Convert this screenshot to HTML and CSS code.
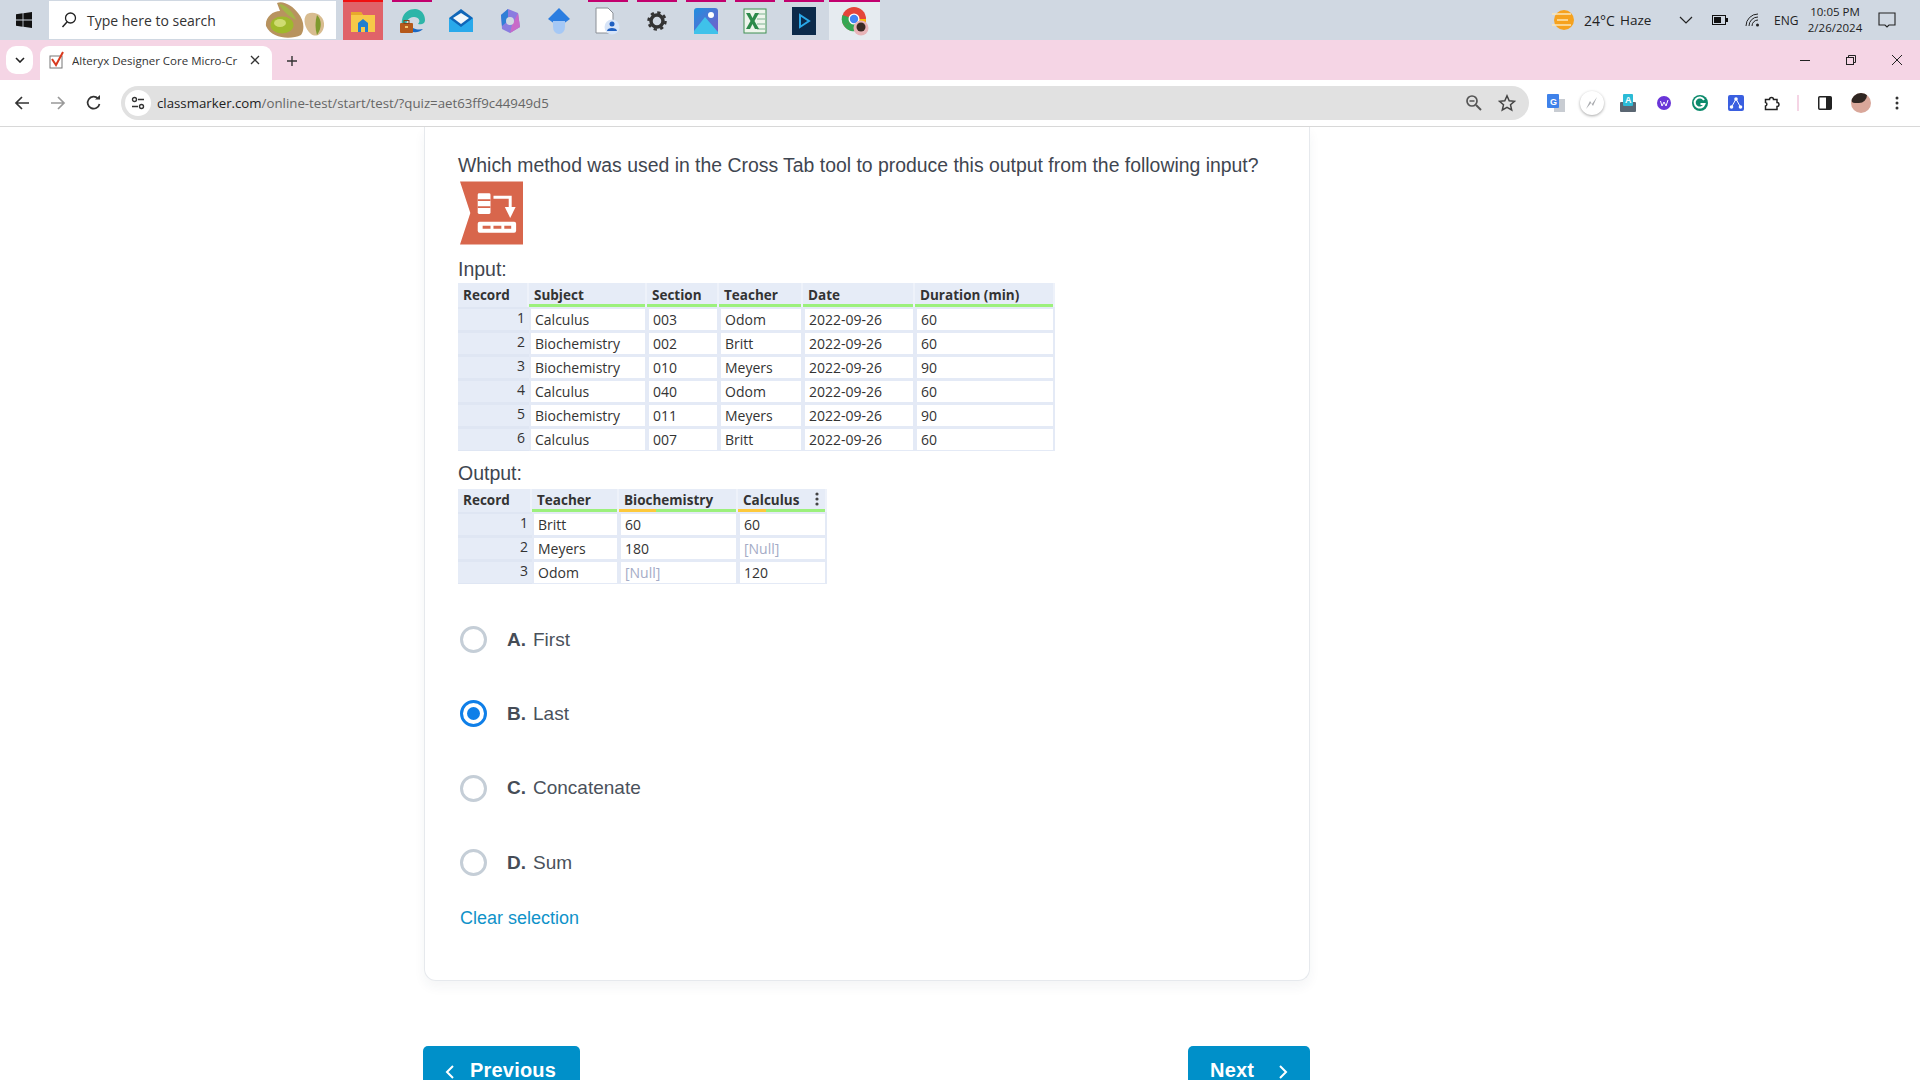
FILE: index.html
```html
<!DOCTYPE html>
<html lang="en">
<head>
<meta charset="utf-8">
<title>Alteryx Designer Core Micro-Credential</title>
<link rel="stylesheet" href="styles.css">
</head>
<body>
<header class="taskbar">
  <div class="start">
    <svg width="16" height="16" viewBox="0 0 16 16"><path fill="#111" d="M0 2.2 6.6 1.3V7.5H0ZM7.4 1.2 16 0V7.5H7.4ZM0 8.4H6.6V14.7L0 13.8ZM7.4 8.4H16V16L7.4 14.8Z"/></svg>
  </div>
  <div class="search">
    <svg width="18" height="18" viewBox="0 0 18 18"><circle cx="10.5" cy="7" r="5" fill="none" stroke="#222" stroke-width="1.3"/><path d="M7 11 2.5 16" stroke="#222" stroke-width="1.5"/></svg>
    <span class="search-text">Type here to search</span>
    <svg class="nuts" width="62" height="38" viewBox="0 0 62 38">
      <path d="M1 25C0 16 8 10 15 10L12 2C18 -1 28 5 33 12 39 19 40 28 36 34 26 39 7 38 1 25Z" fill="#b8935f"/>
      <path d="M14 3C20 3 28 10 31 19 25 16 17 10 14 3Z" fill="#a3b548"/>
      <ellipse cx="17" cy="24" rx="11.500" ry="8.500" fill="#9fb92c"/>
      <ellipse cx="15" cy="22" rx="6" ry="4" fill="#cfdc72"/>
      <path d="M42 13C50 9 60 15 59 25 58 33 51 37 46 33 40 28 37 18 42 13Z" fill="#d8bc90"/>
      <path d="M52 14C57 19 57 27 52 34 50 28 50 20 52 14Z" fill="#7f9a2d"/>
    </svg>
  </div>
  <div class="apps">
    <div class="app app-active">
      <svg width="26" height="24" viewBox="0 0 26 24"><path d="M1 3h10l2 3h12v17H1Z" fill="#f7c948"/><path d="M1 3h10l2 3H1Z" fill="#e8a92c"/><path d="M8 14l5-4 5 4v9H8Z" fill="#1f7fd0"/><rect x="11" y="18" width="4" height="5" fill="#f7c948"/></svg>
    </div>
    <div class="app app-on">
      <svg width="26" height="26" viewBox="0 0 26 26"><path d="M3 12C4 4 11 1 16 1 22 1 26 6 26 12 26 16 22 17 19 16 22 13 20 9 15 9 9 9 6 14 8 20 4 19 2 16 3 12Z" fill="#2db5a8"/><path d="M8 20C11 25 19 26 24 21 20 22 13 22 10 15 8 16 7 18 8 20Z" fill="#1868c4"/><rect x="1" y="15" width="13" height="10" rx="1" fill="#b5591b"/><rect x="5" y="12.500" width="5" height="3" fill="none" stroke="#8a4313"/><rect x="6" y="18" width="3" height="2" fill="#f5c16c"/></svg>
    </div>
    <div class="app">
      <svg width="26" height="24" viewBox="0 0 26 24"><path d="M1 9 13 0 25 9V23H1Z" fill="#0f66b8"/><path d="M1 9 13 18 25 9V23H1Z" fill="#29a9eb"/><path d="M5 9 13 4 21 9 13 15Z" fill="#f2f7fb"/></svg>
    </div>
    <div class="app">
      <svg width="24" height="26" viewBox="0 0 24 26"><path d="M10 1 20 5 22 19 12 25 4 21 3 7Z" fill="#8a7ce0"/><path d="M10 1 3 7 4 18 10 13Z" fill="#2f7fd6"/><path d="M20 5 22 19 12 25 14 17Z" fill="#c86ac8"/><circle cx="12" cy="13" r="4" fill="#d0d8e2"/></svg>
    </div>
    <div class="app">
      <svg width="26" height="28" viewBox="0 0 26 28"><path d="M13 1 24 12 13 20 2 12Z" fill="#2b7de0"/><path d="M7 14H19V20A6 7 0 0 1 7 20Z" fill="#a5c8f5"/></svg>
    </div>
    <div class="app app-on">
      <svg width="26" height="28" viewBox="0 0 26 28"><path d="M1 1H13L18 6V26H1Z" fill="#fff" stroke="#8a8f96"/><circle cx="17" cy="20" r="7.500" fill="#d7e4f7"/><circle cx="17" cy="17" r="2.500" fill="#1e5fc2"/><path d="M12 24C12 20 22 20 22 24Z" fill="#1e5fc2"/></svg>
    </div>
    <div class="app app-on">
      <svg width="20" height="20" viewBox="0 0 20 20"><circle cx="10" cy="10" r="6" fill="none" stroke="#333" stroke-width="3.500"/><circle cx="10" cy="10" r="8.500" fill="none" stroke="#333" stroke-width="2.500" stroke-dasharray="3.300 3.370"/></svg>
    </div>
    <div class="app app-on">
      <svg width="24" height="26" viewBox="0 0 24 26"><defs><linearGradient id="ph" x1="0" y1="0" x2="1" y2="1"><stop offset="0" stop-color="#1e8fe0"/><stop offset="1" stop-color="#7a5cc8"/></linearGradient></defs><rect width="24" height="26" rx="3" fill="url(#ph)"/><path d="M0 23 11 9 24 24V26H0Z" fill="#3fc2ea"/><circle cx="17" cy="7" r="3" fill="#fff"/></svg>
    </div>
    <div class="app app-on">
      <svg width="24" height="26" viewBox="0 0 24 26"><rect x="1" y="1" width="22" height="24" fill="#eef5ec" stroke="#3f8f52"/><path d="M13 6H22M14 11H22M14 16H22M14 21H22" stroke="#a3c9ae" stroke-width="1.500"/><path d="M3 5H7L9.500 10 12 5H16L11.500 13 16 21H12L9.500 16 7 21H3L7.500 13Z" fill="#2c8a4a"/></svg>
    </div>
    <div class="app app-on">
      <svg width="24" height="28" viewBox="0 0 24 28"><rect width="24" height="28" fill="#0c2a4a"/><path d="M8 8 17 14 8 20Z" fill="none" stroke="#2aa8e8" stroke-width="2"/></svg>
    </div>
    <div class="app app-on app-chrome">
      <svg width="28" height="30" viewBox="0 0 28 30"><circle cx="13" cy="13" r="12" fill="#e4453a"/><path d="M13 13 3 20A12 12 0 0 0 17 24.500Z" fill="#34a853"/><path d="M13 13H25A12 12 0 0 1 17 24.500Z" fill="#fbbc05"/><path d="M13 13 1.500 9A12 12 0 0 0 3 20Z" fill="#34a853"/><circle cx="13" cy="13" r="5.500" fill="#fff"/><circle cx="13" cy="13" r="4.200" fill="#4285f4"/><circle cx="20" cy="22" r="7.500" fill="#e8b4b8"/><circle cx="20" cy="21" r="4.500" fill="#3a2a25"/></svg>
    </div>
  </div>
  <div class="tray">
    <svg class="sun" width="24" height="22" viewBox="0 0 24 22"><circle cx="13" cy="11" r="10" fill="#f6a21e"/><path d="M1 5H20M6 11H17M1 16H20" stroke="#fbe6b8" stroke-width="1.600"/></svg>
    <span class="temp">24°C</span>
    <span class="haze">Haze</span>
    <svg class="chev" width="14" height="8" viewBox="0 0 14 8"><path d="M1 1 7 7 13 1" fill="none" stroke="#222" stroke-width="1.200"/></svg>
    <svg class="batt" width="16" height="10" viewBox="0 0 16 10"><rect x=".5" y=".5" width="13" height="9" fill="none" stroke="#111"/><rect x="2" y="2" width="7" height="6" fill="#111"/><rect x="14" y="3" width="2" height="4" fill="#111"/></svg>
    <svg class="wifi" width="16" height="14" viewBox="0 0 16 14"><g fill="none" stroke="#222"><path d="M1 13A12 12 0 0 1 13 1"/><path d="M4 13A9 9 0 0 1 13 4"/><path d="M7 13A6 6 0 0 1 13 7"/></g><circle cx="12.500" cy="12" r="1.500" fill="#222"/></svg>
    <span class="eng">ENG</span>
    <div class="clock"><span>10:05 PM</span><span>2/26/2024</span></div>
    <svg class="notif" width="18" height="16" viewBox="0 0 18 16"><path d="M1 1H17V13H11L9 15 7 13H1Z" fill="none" stroke="#222" stroke-width="1.100"/></svg>
  </div>
</header>

<div class="tabstrip">
  <div class="tabmenu"><svg width="10" height="6" viewBox="0 0 10 6"><path d="M1 1 5 5 9 1" fill="none" stroke="#222" stroke-width="1.600"/></svg></div>
  <div class="tab">
    <svg width="16" height="18" viewBox="0 0 16 18"><rect x="1" y="5" width="12" height="12" fill="#fff" stroke="#777"/><path d="M3 8 7 14 14 1" fill="none" stroke="#d93a1f" stroke-width="2"/></svg>
    <span class="tab-title">Alteryx Designer Core Micro-Cr</span>
    <svg width="10" height="10" viewBox="0 0 10 10"><path d="M1 1 9 9M9 1 1 9" stroke="#333" stroke-width="1.300"/></svg>
  </div>
  <svg class="newtab" width="12" height="12" viewBox="0 0 12 12"><path d="M6 1V11M1 6H11" stroke="#333" stroke-width="1.400"/></svg>
  <div class="winctl">
    <svg width="12" height="12" viewBox="0 0 12 12"><path d="M1 6.500H11" stroke="#222"/></svg>
    <svg width="12" height="12" viewBox="0 0 12 12"><rect x="1.500" y="3.500" width="7" height="7" fill="none" stroke="#222"/><path d="M3.500 3.500V1.500H10.500V8.500H8.500" fill="none" stroke="#222"/></svg>
    <svg width="12" height="12" viewBox="0 0 12 12"><path d="M1 1 11 11M11 1 1 11" stroke="#222"/></svg>
  </div>
</div>

<nav class="toolbar">
  <svg class="nav" width="16" height="16" viewBox="0 0 16 16"><path d="M15 8H2M8 2 2 8 8 14" fill="none" stroke="#333" stroke-width="1.700"/></svg>
  <svg class="nav" width="16" height="16" viewBox="0 0 16 16"><path d="M1 8H14M8 2 14 8 8 14" fill="none" stroke="#999" stroke-width="1.700"/></svg>
  <svg class="nav" width="16" height="16" viewBox="0 0 16 16"><path d="M13.500 9A6 6 0 1 1 12 3.500" fill="none" stroke="#333" stroke-width="1.700"/><path d="M9 4.500H14V0Z" fill="#333"/></svg>
  <div class="omnibox">
    <span class="tune"><svg width="14" height="14" viewBox="0 0 14 14"><g fill="none" stroke="#333" stroke-width="1.400"><circle cx="3.500" cy="3.500" r="2"/><path d="M7 3.500H13M1 10.500H7"/><circle cx="10.500" cy="10.500" r="2"/></g></svg></span>
    <span class="url"><span class="url-host">classmarker.com</span>/online-test/start/test/?quiz=aet63ff9c44949d5</span>
    <svg class="zoomout" width="18" height="18" viewBox="0 0 18 18"><circle cx="7" cy="7" r="5" fill="none" stroke="#555" stroke-width="1.700"/><path d="M4.500 7H9.500" stroke="#555" stroke-width="1.500"/><path d="M11 11 16 16" stroke="#555" stroke-width="2"/></svg>
    <svg class="star" width="18" height="18" viewBox="0 0 18 18"><path d="M9 1.800 11.200 6.700 16.500 7.300 12.500 10.800 13.700 16 9 13.300 4.300 16 5.500 10.800 1.500 7.300 6.800 6.700Z" fill="none" stroke="#444" stroke-width="1.500"/></svg>
  </div>
  <div class="exts">
    <span class="ext"><svg width="18" height="18" viewBox="0 0 18 18"><rect x="7" y="5" width="11" height="13" fill="#c8ccd2"/><rect width="12" height="14" rx="1" fill="#3f82ea"/><text x="3" y="11" class="glyph-g">G</text></svg></span>
    <span class="ext"><span class="bolt"><svg width="20" height="20" viewBox="0 0 20 20"><path d="M15 4 10 11 8 8 4 16 9 10 11 13Z" fill="#a8aaae"/></svg></span></span>
    <span class="ext"><svg width="16" height="18" viewBox="0 0 16 18"><rect y="8" width="16" height="10" rx="1" fill="#5a6672"/><rect x="3" width="10" height="12" rx="1" fill="#2bbbd6"/><text x="5" y="9" class="glyph-a">A</text></svg></span>
    <span class="ext"><svg width="14" height="14" viewBox="0 0 14 14"><circle cx="7" cy="7" r="7" fill="#6a35d8"/><path d="M3.500 5 5 10 7 6 9 10 11 4" fill="none" stroke="#fff" stroke-width="1"/></svg></span>
    <span class="ext"><svg width="16" height="16" viewBox="0 0 16 16"><circle cx="8" cy="8" r="8" fill="#0c8a6c"/><path d="M12 5A5 5 0 1 0 12.500 9H8.500" fill="none" stroke="#fff" stroke-width="2"/></svg></span>
    <span class="ext"><svg width="16" height="16" viewBox="0 0 16 16"><rect width="16" height="16" rx="2" fill="#3a5fe0"/><g fill="#fff"><circle cx="8" cy="4" r="1.800"/><circle cx="3.500" cy="12" r="1.800"/><circle cx="12.500" cy="12" r="1.800"/></g><path d="M8 4 3.500 12M8 4 12.500 12" stroke="#fff"/></svg></span>
    <span class="ext"><svg width="16" height="16" viewBox="0 0 16 16"><path d="M1.500 4.500H5.500A2 2 0 0 1 9.500 4.500H13V7.500A1.800 1.800 0 0 1 13 11.500V14.500H1.500V11A1.800 1.800 0 0 0 1.500 7.500Z" fill="none" stroke="#222" stroke-width="1.500"/></svg></span>
  </div>
  <span class="sep"></span>
  <svg class="side" width="14" height="14" viewBox="0 0 14 14"><rect x=".75" y=".75" width="12.500" height="12.500" rx="1" fill="#fff" stroke="#222" stroke-width="1.500"/><rect x="8" y="1" width="5" height="12" fill="#222"/></svg>
  <span class="avatar"><span class="hair"></span></span>
  <svg class="dots" width="4" height="14" viewBox="0 0 4 14"><g fill="#333"><circle cx="2" cy="2" r="1.500"/><circle cx="2" cy="7" r="1.500"/><circle cx="2" cy="12" r="1.500"/></g></svg>
</nav>

<main class="page">
  <section class="card">
    <p class="question">Which method was used in the Cross Tab tool to produce this output from the following input?</p>
    <svg class="toolicon" width="63" height="64" viewBox="0 0 64 64">
      <path d="M0 0H64V64H0L10.500 32Z" fill="#d8664c"/>
      <rect x="18" y="12" width="13" height="21" rx="1.500" fill="#fff"/>
      <path d="M18 19H31M18 26H31" stroke="#d8664c" stroke-width="1.800"/>
      <path d="M34 16H51V27" fill="none" stroke="#fff" stroke-width="3"/>
      <path d="M45.500 26H56.500L51 37Z" fill="#fff"/>
      <rect x="18" y="41" width="39" height="11" rx="2" fill="#fff"/>
      <path d="M23 46.500H31M34 46.500H42M45 46.500H52" stroke="#d8664c" stroke-width="3"/>
    </svg>
    <p class="label label-input">Input:</p>
    <table class="grid grid-input">
      <thead><tr><th>Record</th><th class="ok">Subject</th><th class="ok">Section</th><th class="ok">Teacher</th><th class="ok">Date</th><th class="ok">Duration (min)</th></tr></thead>
      <tbody>
        <tr><td class="rec">1</td><td>Calculus</td><td>003</td><td>Odom</td><td>2022-09-26</td><td>60</td></tr>
        <tr><td class="rec">2</td><td>Biochemistry</td><td>002</td><td>Britt</td><td>2022-09-26</td><td>60</td></tr>
        <tr><td class="rec">3</td><td>Biochemistry</td><td>010</td><td>Meyers</td><td>2022-09-26</td><td>90</td></tr>
        <tr><td class="rec">4</td><td>Calculus</td><td>040</td><td>Odom</td><td>2022-09-26</td><td>60</td></tr>
        <tr><td class="rec">5</td><td>Biochemistry</td><td>011</td><td>Meyers</td><td>2022-09-26</td><td>90</td></tr>
        <tr><td class="rec">6</td><td>Calculus</td><td>007</td><td>Britt</td><td>2022-09-26</td><td>60</td></tr>
      </tbody>
    </table>
    <p class="label label-output">Output:</p>
    <table class="grid grid-output">
      <thead><tr><th>Record</th><th class="ok">Teacher</th><th class="mix mix-wide">Biochemistry</th><th class="mix mix-thin kebab-cell">Calculus<svg class="kebab" width="4" height="14" viewBox="0 0 4 14"><g fill="#444"><circle cx="2" cy="2" r="1.600"/><circle cx="2" cy="7" r="1.600"/><circle cx="2" cy="12" r="1.600"/></g></svg></th></tr></thead>
      <tbody>
        <tr><td class="rec">1</td><td>Britt</td><td>60</td><td>60</td></tr>
        <tr><td class="rec">2</td><td>Meyers</td><td>180</td><td class="null">[Null]</td></tr>
        <tr><td class="rec">3</td><td>Odom</td><td class="null">[Null]</td><td>120</td></tr>
      </tbody>
    </table>
    <ul class="options">
      <li class="option"><span class="radio"></span><b>A.</b><span>First</span></li>
      <li class="option"><span class="radio radio-on"></span><b>B.</b><span>Last</span></li>
      <li class="option"><span class="radio"></span><b>C.</b><span>Concatenate</span></li>
      <li class="option"><span class="radio"></span><b>D.</b><span>Sum</span></li>
    </ul>
    <a class="clear" href="#">Clear selection</a>
  </section>
  <div class="pager">
    <a class="btn btn-prev" href="#"><svg width="10" height="16" viewBox="0 0 10 16"><path d="M8 2 2 8 8 14" fill="none" stroke="#fff" stroke-width="2"/></svg>Previous</a>
    <a class="btn btn-next" href="#">Next<svg width="10" height="16" viewBox="0 0 10 16"><path d="M2 2 8 8 2 14" fill="none" stroke="#fff" stroke-width="2"/></svg></a>
  </div>
</main>
</body>
</html>
```
FILE: styles.css
```css
* { box-sizing: border-box; }
html, body { margin: 0; height: 1080px; overflow: hidden; background: #fff; }
body { font-family: "Liberation Sans", Arial, sans-serif; color: #3f4650; }

/* Windows taskbar */
.taskbar { height: 40px; display: flex; align-items: center; background: #d0d8e2; font-family: "Open Sans", "Noto Sans", sans-serif; color: #222; }
.start { width: 49px; flex: none; display: flex; justify-content: center; padding-right: 2px; }
.search { width: 287px; height: 38px; flex: none; background: #fff; display: flex; align-items: center; padding-left: 11px; }
.search-text { margin-left: 9px; font-size: 14px; color: #333; }
.nuts { margin-left: auto; margin-right: 9px; }
.apps { display: flex; height: 40px; margin-left: 7px; }
.app { width: 40px; margin-right: 9px; height: 40px; display: flex; align-items: center; justify-content: center; border-top: 2px solid transparent; flex: none; }
.app-active { background: #e06369; border-top: 2px solid #f01010; }
.app-on { border-top-color: #c2006e; }
.app-chrome { width: 51px; margin-left: -4px; background: #e6ebf0; }
.tray { margin-left: auto; display: flex; align-items: center; height: 40px; font-size: 13px; }
.sun { margin-right: 9px; }
.temp { width: 36px; font-size: 14px; }
.haze { width: 56px; font-size: 13.500px; }
.chev { margin-right: 19px; margin-left: 3px; }
.batt { margin-right: 17px; }
.wifi { margin-right: 13px; }
.eng { font-size: 12px; width: 30px; }
.clock { display: flex; flex-direction: column; align-items: center; width: 62px; font-size: 11.500px; line-height: 16px; margin-right: 12px; }
.notif { margin-right: 24px; }

/* Chrome tab strip */
.tabstrip { height: 40px; background: #f5d5e5; display: flex; align-items: flex-end; position: relative; font-family: "Open Sans", "Noto Sans", sans-serif; }
.tabmenu { position: absolute; left: 6px; top: 6px; width: 27px; height: 28px; background: #fff; border-radius: 10px; display: flex; align-items: center; justify-content: center; }
.tab { margin-left: 40px; width: 232px; height: 34px; background: #fff; border-radius: 9px 9px 0 0; display: flex; align-items: center; padding: 0 12px 6px 9px; }
.tab-title { flex: 1; margin-left: 7px; margin-right: 4px; font-size: 11.500px; color: #333; white-space: nowrap; overflow: hidden; }
.newtab { margin: 0 0 13px 14px; }
.winctl { margin-left: auto; align-self: center; display: flex; gap: 34px; padding-right: 17px; }

/* Chrome toolbar */
.toolbar { height: 48px; background: #fff; border-radius: 9px 9px 0 0; margin-top: -1px; border-bottom: 1px solid #d8d8d8; display: flex; align-items: center; padding: 0 0 0 14px; }
.nav { margin-right: 20px; flex: none; }
.omnibox { width: 1408px; margin-left: -1px; height: 34px; background: #e1e1e1; border-radius: 17px; display: flex; align-items: center; padding: 0 13px 0 4px; flex: none; }
.tune { width: 26px; height: 26px; background: #fff; border-radius: 50%; display: flex; align-items: center; justify-content: center; flex: none; }
.url { margin-left: 6px; font-family: "Open Sans", "Noto Sans", sans-serif; font-size: 13.250px; color: #666; white-space: nowrap; }
.url-host { color: #222; }
.zoomout { margin-left: auto; margin-right: 15px; }
.exts { display: flex; align-items: center; margin-left: 9px; flex: none; }
.ext { width: 36px; display: flex; justify-content: center; align-items: center; }
.glyph-g { font: bold 9px "Liberation Sans", sans-serif; fill: #fff; }
.glyph-a { font: bold 9px "Liberation Sans", sans-serif; fill: #fff; }
.bolt { width: 24px; height: 24px; border-radius: 50%; background: #fff; box-shadow: 0 1px 3px rgba(0,0,0,.35); display: flex; align-items: center; justify-content: center; }
.sep { width: 2px; height: 16px; background: #f5d5e5; margin-left: 7px; flex: none; }
.side { margin-left: 19px; flex: none; }
.avatar { width: 20px; height: 20px; margin-left: 19px; border-radius: 50%; background: #d9a79a; overflow: hidden; flex: none; display: block; }
.hair { display: block; width: 16px; height: 10px; background: #2f2622; border-radius: 0 0 8px 4px; }
.dots { margin-left: 24px; flex: none; }

/* Page */
.page { height: 953px; overflow: hidden; padding-left: 424px; }
.card { width: 886px; height: 854px; background: #fff; border: 1px solid #e6e9ed; border-top: 0; border-radius: 0 0 12px 12px; box-shadow: 0 6px 12px rgba(40,60,80,.05); padding: 0 0 0 33px; }
.question { margin: 0; padding-top: 25px; font-size: 19.400px; line-height: 26px; color: #3f4650; white-space: nowrap; }
.toolicon { display: block; margin: 3px 0 0 2px; }
.label { margin: 0; font-size: 19.500px; line-height: 24px; color: #3f4650; }
.label-input { margin-top: 12px; }
.label-output { margin-top: 10px; }
.grid { border-collapse: separate; border-spacing: 0; table-layout: fixed; font-family: "Open Sans", "Noto Sans", sans-serif; font-size: 14px; color: #333; background: #e4eaf6; }
.grid-input { width: 597px; margin-top: 2px; }
.grid-output { width: 369px; margin-top: 4px; }
.grid-input th:nth-child(1) { width: 71px; }
.grid-input th:nth-child(2) { width: 118px; }
.grid-input th:nth-child(3) { width: 72px; }
.grid-input th:nth-child(4) { width: 84px; }
.grid-input th:nth-child(5) { width: 112px; }
.grid-output th:nth-child(1) { width: 74px; }
.grid-output th:nth-child(2) { width: 87px; }
.grid-output th:nth-child(3) { width: 119px; }
.grid th { height: 24px; padding: 0 0 1px 5px; text-align: left; font-weight: 700; font-size: 13.500px; background: #e6ecf7; border-right: 2px solid #eef2fa; white-space: nowrap; line-height: 20px; }
.grid-output th { height: 23px; }
.grid th.ok { box-shadow: inset 0 -3px 0 #9cf07c; }
.grid th.mix { background-image: linear-gradient(#fdc93b, #fdc93b), linear-gradient(#9cf07c, #9cf07c); background-repeat: no-repeat; background-position: left bottom; background-size: 37px 3px, 100% 3px; }
.grid th.mix-thin { background-size: 28px 3px, 100% 3px; }
.kebab-cell { position: relative; }
.kebab { position: absolute; right: 6px; top: 3px; }
.grid td { height: 24px; padding: 1px 0 0 4px; background: #fff; border: 1px solid #e4eaf6; border-width: 2px 2px 1px 2px; white-space: nowrap; line-height: 18px; }
.grid td.rec { background: #e6ecf7; text-align: right; padding: 0 4px 3px 0; border-color: #dfe6f3; border-width: 2px 0 1px 0; }
.grid td.null { color: #a4abc6; }

/* Options */
.options { list-style: none; margin: 18.500px 0 0; padding: 0; }
.option { height: 74.300px; display: flex; align-items: center; font-size: 19px; color: #4a515b; }
.option b { margin-left: 20px; margin-right: 7px; color: #454c56; }
.radio { width: 27px; height: 27px; margin-left: 2px; border: 3px solid #c5ced7; border-radius: 50%; background: #fff; flex: none; display: flex; align-items: center; justify-content: center; }
.radio-on { border-color: #0f7fe8; }
.radio-on::after { content: ""; width: 13px; height: 13px; border-radius: 50%; background: #0f7fe8; }
.clear { display: block; margin: 7.500px 0 0 2px; font-size: 18px; line-height: 22px; color: #0f92c9; text-decoration: none; }

/* Pager */
.pager { width: 887px; margin-left: -1px; margin-top: 65px; display: flex; justify-content: space-between; }
.btn { height: 50px; background: #0090c9; border-radius: 5px; color: #fff; font-size: 20px; line-height: 18px; font-weight: bold; text-decoration: none; display: flex; align-items: flex-start; letter-spacing: .2px; padding-top: 15px; }
.btn-prev { width: 157px; padding-left: 22px; gap: 15px; }
.btn-next { width: 122px; padding-left: 22px; gap: 24px; }
.btn svg { margin-top: 3px; }
```
